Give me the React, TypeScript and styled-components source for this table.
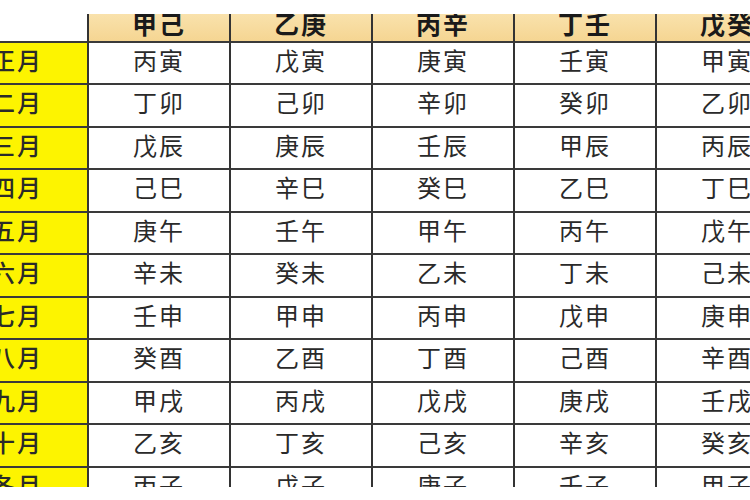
import React from "react";
import styled, { createGlobalStyle } from "styled-components";

const Global = createGlobalStyle`
  html, body { margin: 0; padding: 0; background: #ffffff; }
  body { width: 750px; height: 500px; overflow: hidden; }
`;

const Page = styled.div`
  width: 750px;
  height: 500px;
  overflow: hidden;
  background: #ffffff;
  padding-top: 14px;
  box-sizing: border-box;
`;

const Clip = styled.div`
  height: 473px;
  overflow: hidden;
  margin-left: -53px;
  width: 853px;
`;

const Grid = styled.div`
  display: grid;
  grid-template-columns: repeat(6, 142px);
  grid-template-rows: 28.7px;
  grid-auto-rows: 42.5px;
  font-family: "Noto Sans CJK SC", "Noto Sans", sans-serif;
  color: #222;
`;

const Cell = styled.div<{ $kind: "corner" | "head" | "month" | "body" }>`
  box-sizing: border-box;
  border-right: 2px solid #333;
  border-bottom: 2px solid #3a3a3a;
  display: flex;
  justify-content: center;
  overflow: hidden;
  background: ${(p) =>
    p.$kind === "head"
      ? "linear-gradient(#f9e2ac, #f5d592)"
      : p.$kind === "month"
      ? "#fdf400"
      : "#ffffff"};
  align-items: ${(p) => (p.$kind === "head" ? "flex-end" : "center")};
  font-size: ${(p) => (p.$kind === "head" ? "25px" : "24px")};
  font-weight: ${(p) => (p.$kind === "head" ? 700 : p.$kind === "month" ? 500 : 400)};
  line-height: 1;
  padding-bottom: ${(p) => (p.$kind === "head" ? "5px" : "6px")};
  letter-spacing: 2px;
  color: ${(p) => (p.$kind === "head" ? "#1a1a1a" : "#2a2a2a")};
`;

const heads = ["甲己", "乙庚", "丙辛", "丁壬", "戊癸"];
const months = ["正月", "二月", "三月", "四月", "五月", "六月", "七月", "八月", "九月", "十月", "冬月"];
const cols = [
  ["丙寅", "丁卯", "戊辰", "己巳", "庚午", "辛未", "壬申", "癸酉", "甲戌", "乙亥", "丙子"],
  ["戊寅", "己卯", "庚辰", "辛巳", "壬午", "癸未", "甲申", "乙酉", "丙戌", "丁亥", "戊子"],
  ["庚寅", "辛卯", "壬辰", "癸巳", "甲午", "乙未", "丙申", "丁酉", "戊戌", "己亥", "庚子"],
  ["壬寅", "癸卯", "甲辰", "乙巳", "丙午", "丁未", "戊申", "己酉", "庚戌", "辛亥", "壬子"],
  ["甲寅", "乙卯", "丙辰", "丁巳", "戊午", "己未", "庚申", "辛酉", "壬戌", "癸亥", "甲子"],
];

export default function App() {
  return (
    <Page>
      <Global />
      <Clip>
        <Grid>
          <Cell $kind="corner" />
          {heads.map((h) => (
            <Cell key={h} $kind="head">{h}</Cell>
          ))}
          {months.map((m, r) => (
            <React.Fragment key={m}>
              <Cell $kind="month">{m}</Cell>
              {cols.map((c, i) => (
                <Cell key={i} $kind="body">{c[r]}</Cell>
              ))}
            </React.Fragment>
          ))}
        </Grid>
      </Clip>
    </Page>
  );
}
